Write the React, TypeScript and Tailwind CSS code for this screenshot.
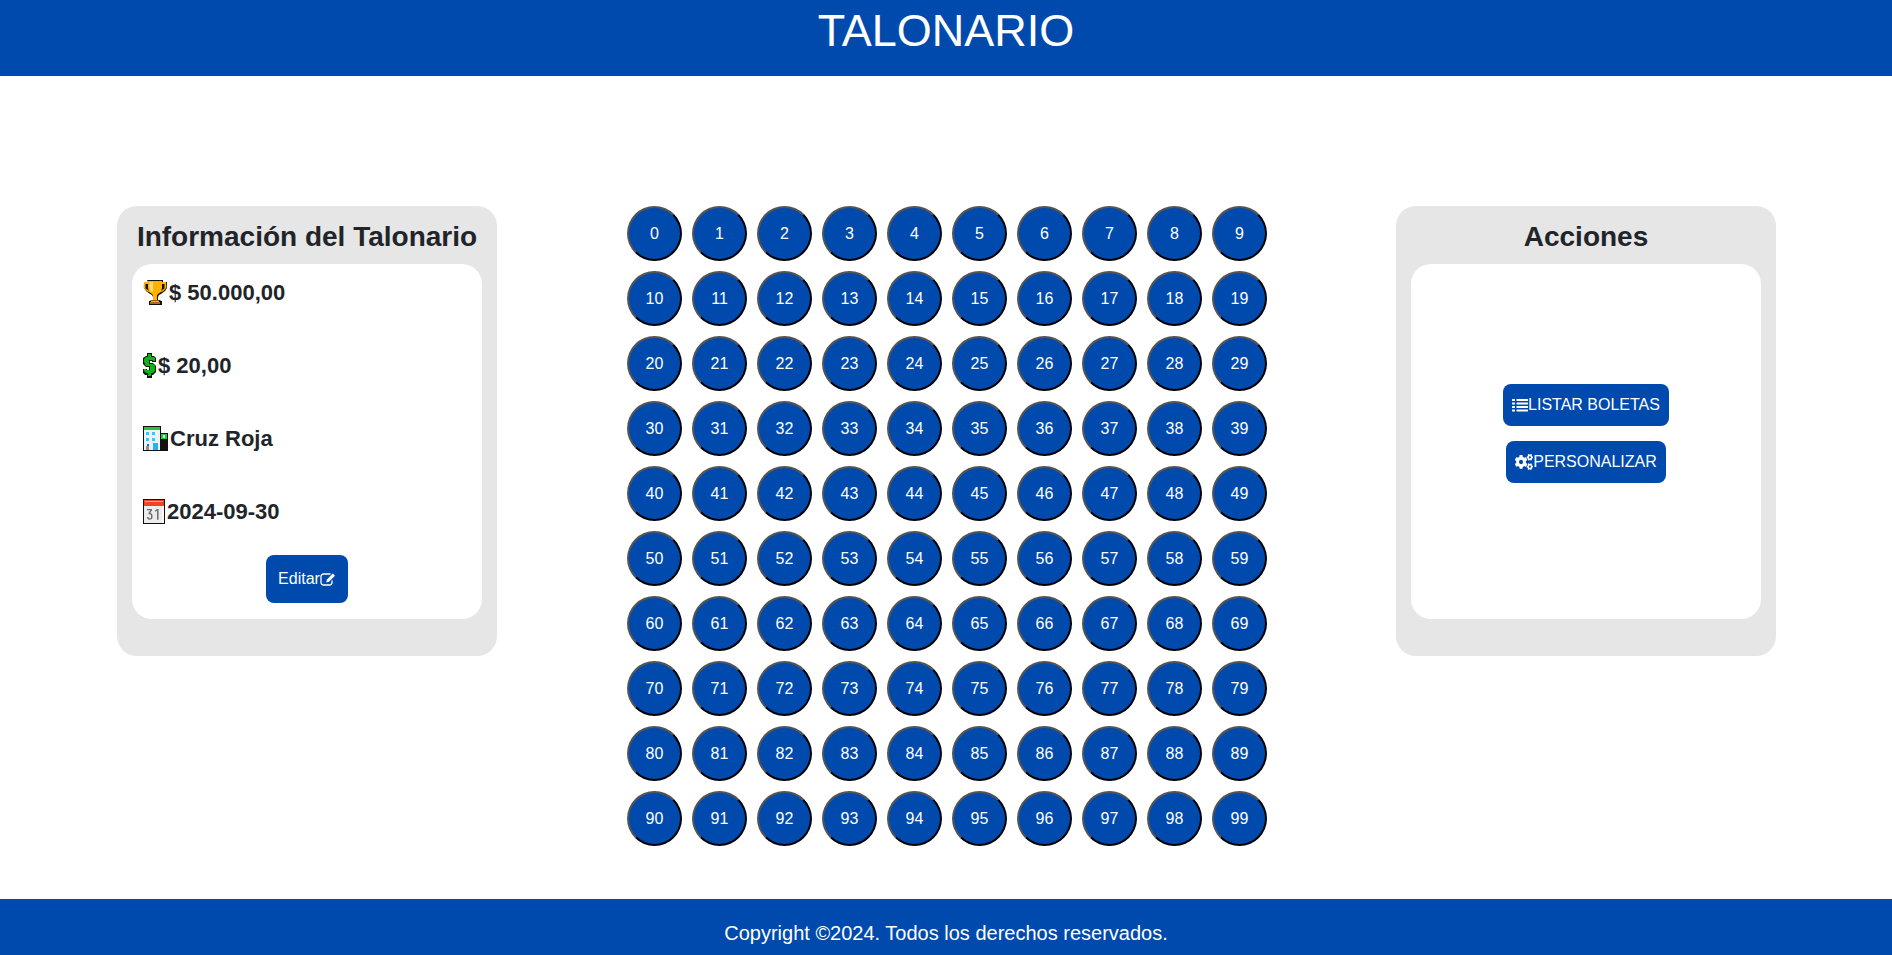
import React from "react";
import { FaCogs } from "react-icons/fa";

const F = "font-['Liberation_Sans',Arial,sans-serif]";

function Trophy() {
  return (
    <svg width="24" height="25" viewBox="0 0 24 25" className="shrink-0">
      <path d="M4 0h16v2h4v6l-2 3-4 3-2 1-1 2v3h2l1 1h1v4H6v-4h1l1-1h2v-3l-1-2-2-1-4-3-2-3V2h4z" fill="#111" />
      <path d="M1 2h4v2H2.500v4.500l3 2 .5 2-3-2-2.500-3zM23 2h-4v2h2.500v4.500l-3 2-.5 2 3-2 2.500-3z" fill="#ffb300" />
      <path d="M5 1h14v7l-1 4-3 2-1 1.500V20h-4v-4.500L9 14l-3-2-1-4z" fill="#ffb300" />
      <path d="M6.500 2H10v9.500H8L6.500 8z" fill="#ffdc73" />
      <path d="M8 20.500h8V22H8z" fill="#ffb300" />
      <path d="M7 22h10v2H7z" fill="#a9682d" />
    </svg>
  );
}

function Dollar() {
  return (
    <svg width="13" height="25" viewBox="0 0 13 25" className="shrink-0">
      <path d="M4 0h5v3h2l2 2v4H9v-1H7v2h3l3 3v6l-3 3H9v3H4v-3H2l-2-2v-4h4v1h2v-3H3l-3-3V5l3-2h1z" fill="#111" />
      <path d="M5 1h3v3h3l1 1v3h-2V7H6v4h4l2 2v5l-2 2H8v3H5v-3H3l-2-2v-2h2v1h4v-4H3L1 9V6l2-2h2z" fill="#0db512" />
    </svg>
  );
}

function Building() {
  return (
    <svg width="25" height="25" viewBox="0 0 25 25" className="shrink-0">
      <rect x="0" y="0" width="18" height="25" fill="#111" />
      <rect x="1" y="1" width="16" height="3" fill="#27c24a" />
      <rect x="1" y="4" width="16" height="20" fill="#eef1f2" />
      <rect x="3" y="6" width="3" height="3" fill="#35c6ff" />
      <rect x="9" y="6" width="3" height="3" fill="#35c6ff" />
      <rect x="3" y="12" width="3" height="3" fill="#35c6ff" />
      <rect x="9" y="12" width="3" height="3" fill="#35c6ff" />
      <rect x="10" y="17" width="5" height="7" fill="#22b4f0" />
      <rect x="3" y="20" width="3" height="4" fill="#8a8f99" />
      <rect x="4" y="18" width="2" height="2" fill="#3a5fd0" />
      <rect x="17" y="7" width="8" height="18" fill="#111" />
      <rect x="18" y="8" width="6" height="5" fill="#27c24a" />
      <rect x="20" y="9" width="2" height="3" fill="#d8f5d8" />
    </svg>
  );
}

function Calendar() {
  return (
    <svg width="22" height="25" viewBox="0 0 22 25" className="shrink-0">
      <rect x="0" y="0" width="22" height="25" fill="#111" />
      <rect x="1" y="1" width="20" height="6" fill="#f0442a" />
      <rect x="2" y="2" width="18" height="1" fill="#f7a596" />
      <rect x="1" y="7" width="20" height="17" fill="#ececec" />
      <rect x="19" y="7" width="2" height="17" fill="#fafafa" />
      <path d="M4 10h5v1.300L7.200 14c1.500.2 2.300 1.200 2.300 2.800v1.200c0 1.800-1 2.800-2.800 2.800S4 19.800 4 18h1.500c0 .8.400 1.400 1.200 1.400s1.300-.6 1.300-1.500v-1.200c0-1-.5-1.500-1.400-1.500H5.500v-1.100L7.300 11.300H4zM14 10h1.500v10.800H14v-9l-2 .9v-1.300z" fill="#6d6d6d" />
    </svg>
  );
}

function ListIcon() {
  return (
    <svg width="16" height="14" viewBox="0 0 16 14" fill="currentColor" className="shrink-0">
      <rect x="0" y="1" width="3" height="2" rx="0.500" />
      <rect x="0" y="4.500" width="3" height="2" rx="0.500" />
      <rect x="0" y="8" width="3" height="2" rx="0.500" />
      <rect x="0" y="11.500" width="3" height="2" rx="0.500" />
      <rect x="4.500" y="1" width="11.500" height="2" rx="0.500" />
      <rect x="4.500" y="4.500" width="11.500" height="2" rx="0.500" />
      <rect x="4.500" y="8" width="11.500" height="2" rx="0.500" />
      <rect x="4.500" y="11.500" width="11.500" height="2" rx="0.500" />
    </svg>
  );
}

function EditIcon() {
  return (
    <svg width="16" height="14" viewBox="0 0 16 14" className="shrink-0">
      <path d="M10.500 2H3.500A2.500 2.500 0 0 0 1 4.500v6A2.500 2.500 0 0 0 3.500 13h6a2.500 2.500 0 0 0 2.500-2.500V8.500" fill="none" stroke="currentColor" strokeWidth="1.300" />
      <path d="M6.800 7.700 12.800 1.500l2.200 2.200-6 6.100-2.700.6z" fill="currentColor" />
    </svg>
  );
}

function InfoRow({ icon, text }: { icon: React.ReactNode; text: string }) {
  return (
    <div className="flex items-center h-[25px] pl-[11px] mb-[48px] text-[22px] font-bold text-[#212529]">
      {icon}
      <span className="ml-[2px]">{text}</span>
    </div>
  );
}

function Panel({ title, children }: { title: string; children: React.ReactNode }) {
  return (
    <section className="w-[380px] h-[450px] bg-[#e6e6e6] rounded-[20px] px-[15px]">
      <h2 className="h-[58px] pt-[4px] flex items-center justify-center text-[28px] font-bold text-[#212529]">{title}</h2>
      <div className="w-[350px] h-[355px] bg-white rounded-[20px]">{children}</div>
    </section>
  );
}

const btn = "bg-[#004aad] text-white rounded-[8px] flex items-center justify-center text-[16px]";

export default function App() {
  const nums = Array.from({ length: 100 }, (_, i) => i);
  return (
    <div className={`${F} h-[955px] flex flex-col bg-white overflow-hidden`}>
      <header className="h-[76px] shrink-0 bg-[#004aad] text-white flex justify-center">
        <h1 className="text-[45px] leading-[62px] font-normal">TALONARIO</h1>
      </header>
      <main className="flex-1 flex justify-between items-start pt-[130px] pl-[117px] pr-[116px]">
        <Panel title="Información del Talonario">
          <div className="pt-[16px]">
            <InfoRow icon={<Trophy />} text="$ 50.000,00" />
            <InfoRow icon={<Dollar />} text="$ 20,00" />
            <InfoRow icon={<Building />} text="Cruz Roja" />
            <InfoRow icon={<Calendar />} text="2024-09-30" />
          </div>
          <div className="flex justify-center -mt-[17px]">
            <button className={`${btn} w-[82px] h-[48px]`}>
              Editar
              <EditIcon />
            </button>
          </div>
        </Panel>
        <div className="ml-px grid grid-cols-[repeat(10,55px)] gap-[10px]">
          {nums.map((n) => (
            <button
              key={n}
              className="w-[55px] h-[55px] rounded-full bg-[#004aad] text-white text-[16px] border-2 border-black [border-style:outset] flex items-center justify-center"
            >
              {n}
            </button>
          ))}
        </div>
        <Panel title="Acciones">
          <div className="h-full flex flex-col items-center pt-[120px] gap-[15px]">
            <button className={`${btn} w-[166px] h-[42px]`}>
              <ListIcon />
              LISTAR BOLETAS
            </button>
            <button className={`${btn} w-[160px] h-[42px]`}>
              <FaCogs className="w-[18px] h-[16px]" preserveAspectRatio="none" />
              PERSONALIZAR
            </button>
          </div>
        </Panel>
      </main>
      <footer className="h-[56px] shrink-0 bg-[#004aad] text-white flex items-center justify-center text-[20px] pt-[12px]">
        Copyright ©2024. Todos los derechos reservados.
      </footer>
    </div>
  );
}
